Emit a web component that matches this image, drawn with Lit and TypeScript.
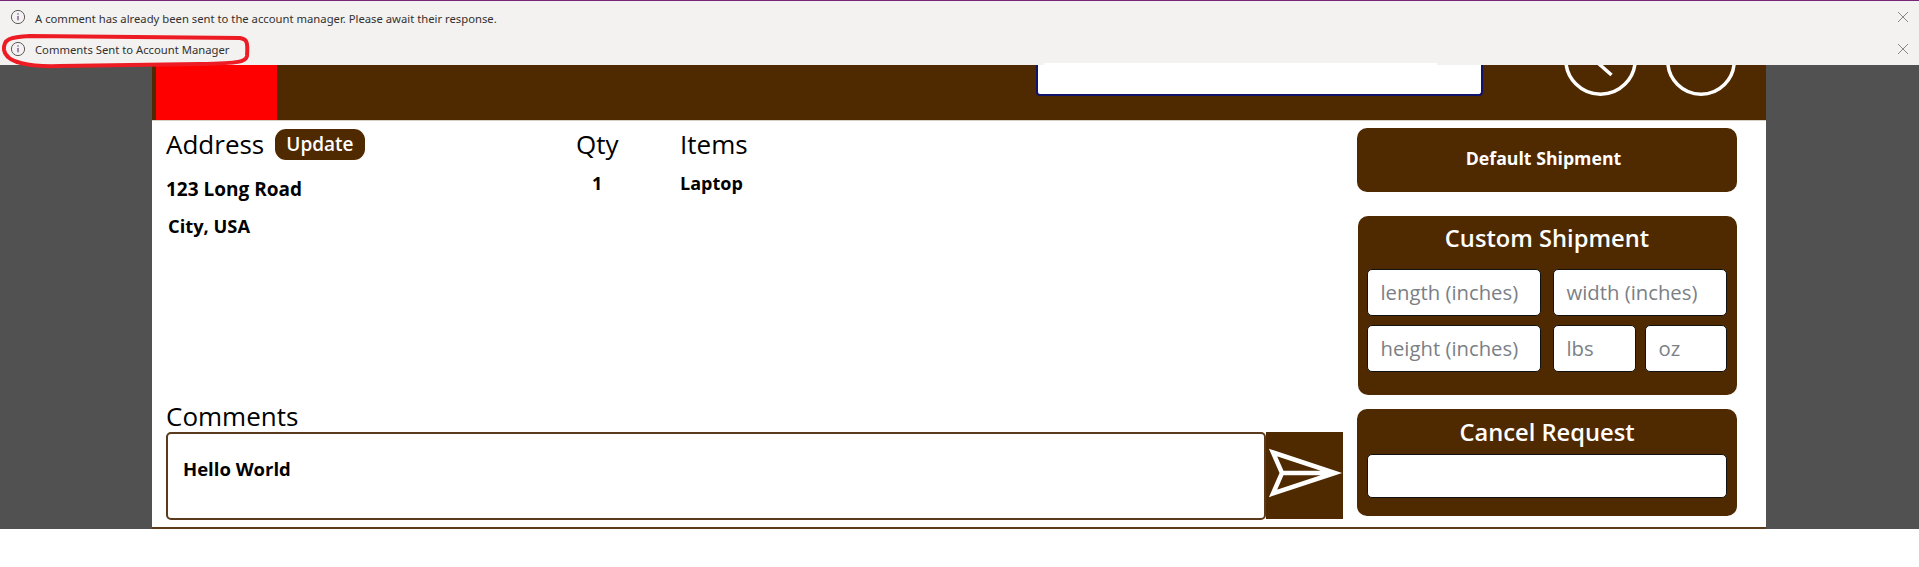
import { LitElement, html, css } from "lit";
import { customElement } from "lit/decorators.js";

const info = html`<svg class="info" viewBox="0 0 16 16" width="16" height="16" aria-hidden="true"><circle cx="8" cy="8" r="6.6" fill="none" stroke="#5f5b5b" stroke-width="1"/><path d="M8 7v4.2" stroke="#5c2d7a" stroke-width="1.1" fill="none"/><circle cx="8" cy="5" r=".7" fill="#5c2d7a"/></svg>`;
const close = html`<svg class="close" viewBox="0 0 12 12" width="12" height="12" aria-hidden="true"><path d="M1 1l10 10M11 1L1 11" stroke="#8a8886" stroke-width="1" fill="none"/></svg>`;

@customElement("app-root")
export class AppRoot extends LitElement {
  static styles = css`
    :host { display: block; position: relative; font-family: "Open Sans", "Liberation Sans", sans-serif; color: #000; background: #fff; height: 567px; overflow: hidden; }
    .bar { height: 1px; background: #742774; }
    .notices { height: 64px; background: #f3f2f1; display: flex; flex-direction: column; }
    .notice { height: 32px; display: flex; align-items: center; padding: 0 10px 0 10px; font-family: "Noto Sans", sans-serif; font-size: 11.27px; color: #323130; box-sizing: border-box; }
    .notice:first-child { padding-top: 3px; }
    .notice:first-child svg { margin-top: -3px; }
    .notice span { flex: 1; margin-left: 9px; }
    .info { flex: none; }
    .close { flex: none; }
    .page { display: grid; grid-template-columns: 152px 1614px 153px; height: 464px; }
    .side { background: #515151; }
    .center { display: flex; flex-direction: column; min-width: 0; }
    .header { height: 55px; background: #4f2900; display: flex; align-items: flex-end; overflow: hidden; border-bottom: 1px solid #d8d0c6; flex: none; box-sizing: content-box; }
    .logo { width: 121px; height: 55px; background: #f00; margin-left: 4px; flex: none; }
    .search { width: 447px; height: 45px; background: #fff; border: 2px solid #10136b; border-top: 0; border-radius: 0 0 4px 4px; box-sizing: border-box; margin: 0 0 24px 759px; flex: none; }
    .ring { flex: none; margin-bottom: 24px; }
    .ring.one { margin-left: 81px; }
    .ring.two { margin-left: 29px; }
    .main { height: 408px; box-sizing: border-box; background: #fff; border-bottom: 2px solid #5a3a1a; display: flex; padding: 7px 29px 0 14px; gap: 14px; }
    .left { width: 1177px; display: flex; flex-direction: column; flex: none; }
    .top { flex: 1; display: flex; }
    .addr { width: 410px; flex: none; }
    .qty { width: 104px; flex: none; }
    .h { font-size: 26px; line-height: 32px; }
    .title { display: flex; align-items: center; gap: 11px; height: 32px; }
    .pill { background: #4f2900; color: #fff; border: 0; border-radius: 11px; font: 600 19px/31px "Open Sans", sans-serif; height: 31px; padding: 0 11px; }
    .b { font-size: 18px; font-weight: 700; line-height: 24px; }
    .l1 { margin-top: 17px; font-size: 19px; }
    .l2 { margin-top: 13px; margin-left: 2px; font-size: 18.3px; }
    .c1 { margin-top: 11px; }
    .one-num { padding-left: 16px; }
    .clabel { font-size: 26px; line-height: 24px; }
    .row { display: flex; height: 88px; margin-bottom: 7px; margin-top: 4px; }
    .ta { flex: 1; border: 2px solid #5a3a1a; border-radius: 5px; background: #fff; box-sizing: border-box; padding: 23px 15px 0; font-size: 18.5px; font-weight: 700; line-height: 24px; }
    .send { width: 77px; height: 87px; background: #4f2900; flex: none; display: flex; }
    .right { width: 380px; flex: none; display: flex; flex-direction: column; }
    .panel { background: #4f2900; color: #fff; border-radius: 10px; box-sizing: border-box; text-align: center; }
    .default { height: 64px; display: flex; align-items: center; justify-content: center; font-size: 17.7px; font-weight: 700; padding: 0 7px 4px 0; }
    .custom { height: 179px; margin-top: 24px; padding: 8px 10px 0 9px; margin-left: 1px; }
    .cancel { height: 107px; margin-top: 14px; padding: 9px 10px 0; }
    .ptitle { font-size: 23.7px; font-weight: 600; line-height: 28px; }
    .row2 { display: grid; grid-template-columns: 174px 174px; column-gap: 12px; }
    .inp { background: #fff; border: 1px solid #111; border-radius: 5px; box-sizing: border-box; text-align: left; color: #7b7f86; font-size: 20.3px; line-height: 45px; padding-left: 12.5px; height: 47px; min-width: 0; }
    .pair { display: grid; grid-template-columns: 83px 82px; column-gap: 9px; }
    .grid2 { margin-top: 17px; display: grid; row-gap: 9px; }
    .cancel .inp { height: 44px; margin-top: 8px; }
    .mark { position: absolute; left: 0; top: 33px; pointer-events: none; }
    .sliver { position: absolute; left: 1044px; top: 63px; width: 393px; height: 2px; background: #fff; }
  `;

  render() {
    return html`
      <div class="bar"></div>
      <div class="notices">
        <div class="notice">${info}<span>A comment has already been sent to the account manager. Please await their response.</span>${close}</div>
        <div class="notice">${info}<span>Comments Sent to Account Manager</span>${close}</div>
      </div>
      <div class="page">
        <div class="side"></div>
        <div class="center">
          <div class="header">
            <div class="logo"></div>
            <div class="search"></div>
            <svg class="ring one" width="73" height="73" viewBox="0 0 73 73" aria-hidden="true"><circle cx="36.500" cy="36.500" r="34.700" fill="none" stroke="#fff" stroke-width="3.5"/><path d="M30 36.500L47.500 52" stroke="#fff" stroke-width="3.5" fill="none"/></svg>
            <svg class="ring two" width="70" height="70" viewBox="0 0 70 70" aria-hidden="true"><circle cx="35" cy="35" r="33.200" fill="none" stroke="#fff" stroke-width="3.5"/></svg>
          </div>
          <div class="main">
            <div class="left">
              <div class="top">
                <div class="addr">
                  <div class="title"><span class="h">Address</span><button class="pill">Update</button></div>
                  <div class="b l1">123 Long Road</div>
                  <div class="b l2">City, USA</div>
                </div>
                <div class="qty">
                  <div class="h">Qty</div>
                  <div class="b c1 one-num">1</div>
                </div>
                <div>
                  <div class="h">Items</div>
                  <div class="b c1">Laptop</div>
                </div>
              </div>
              <div class="clabel">Comments</div>
              <div class="row">
                <div class="ta">Hello World</div>
                <div class="send">
                  <svg width="77" height="87" viewBox="0 0 77 87" aria-hidden="true"><path d="M7 20.500L69 41 7 61.500 16 41zM16 41h53" fill="none" stroke="#fff" stroke-width="4.500"/></svg>
                </div>
              </div>
            </div>
            <div class="right">
              <div class="panel default">Default Shipment</div>
              <div class="panel custom">
                <div class="ptitle">Custom Shipment</div>
                <div class="grid2">
                  <div class="row2"><div class="inp">length (inches)</div><div class="inp">width (inches)</div></div>
                  <div class="row2"><div class="inp">height (inches)</div><div class="pair"><div class="inp">lbs</div><div class="inp">oz</div></div></div>
                </div>
              </div>
              <div class="panel cancel">
                <div class="ptitle">Cancel Request</div>
                <div class="inp"></div>
              </div>
            </div>
          </div>
        </div>
        <div class="side"></div>
      </div>
      <div class="sliver"></div>
      <svg class="mark" width="252" height="38" viewBox="0 0 252 38" aria-hidden="true"><path d="M4 17C3 6 10 4 30 3L240 5C247 6 248 9 247 23C246 29 240 30 200 31L60 33C30 34 6 30 4 17Z" fill="none" stroke="#ed1c24" stroke-width="4"/></svg>
    `;
  }
}
